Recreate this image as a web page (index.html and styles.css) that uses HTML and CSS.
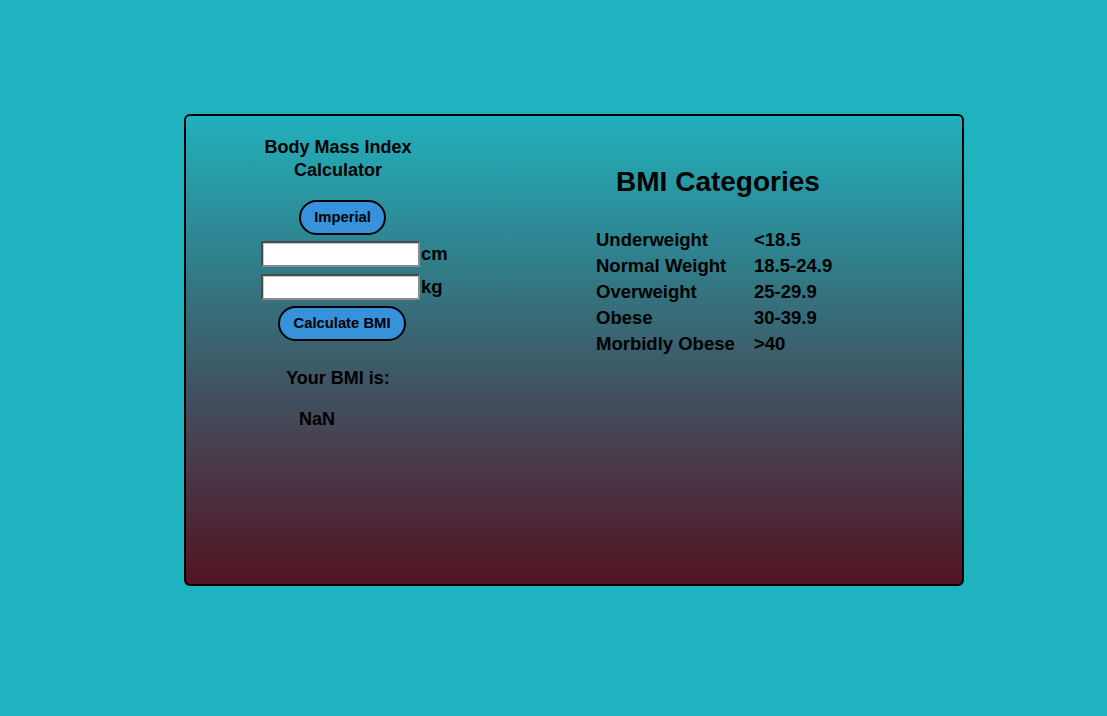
FILE: index.html
```html
<!DOCTYPE html>
<html>
<head>
<meta charset="utf-8">
<title>BMI Calculator</title>
<link rel="stylesheet" href="styles.css">
</head>
<body>
<div class="page">
  <div class="card">
    <div class="calc">
      <h2 class="calc-title">Body Mass Index<br>Calculator</h2>
      <button class="pill pill-imperial">Imperial</button>
      <div class="field"><input type="text" class="num"><span class="unit">cm</span></div>
      <div class="field field-2"><input type="text" class="num"><span class="unit">kg</span></div>
      <button class="pill pill-calc">Calculate BMI</button>
      <p class="result-label">Your BMI is:</p>
      <p class="result-value">NaN</p>
    </div>
    <div class="cats">
      <div class="cats-box">
        <h1 class="cats-title">BMI Categories</h1>
        <div class="cats-table">
          <span>Underweight</span><span>&lt;18.5</span>
          <span>Normal Weight</span><span>18.5-24.9</span>
          <span>Overweight</span><span>25-29.9</span>
          <span>Obese</span><span>30-39.9</span>
          <span>Morbidly Obese</span><span>&gt;40</span>
        </div>
      </div>
    </div>
  </div>
</div>
</body>
</html>
```
FILE: styles.css
```css
html, body {
  margin: 0;
  padding: 0;
  background: #1eb3be;
  font-family: "Liberation Sans", Arial, sans-serif;
  font-weight: bold;
  color: #000;
}
.page {
  padding: 114px 0 0 184px;
  height: 716px;
  box-sizing: border-box;
}
.card {
  width: 780px;
  height: 472px;
  box-sizing: border-box;
  border: 2px solid #000;
  border-radius: 6px;
  background: linear-gradient(to bottom, #21b1bc 0%, #35707c 40%, #474050 70%, #511421 100%);
  display: flex;
}
.calc {
  width: 304px;
  padding-top: 20px;
  display: flex;
  flex-direction: column;
  align-items: flex-start;
}
.calc-title {
  margin: 0;
  align-self: stretch;
  text-align: center;
  font-size: 18px;
  line-height: 23px;
  font-weight: bold;
}
.pill {
  font-family: "Liberation Sans", Arial, sans-serif;
  font-weight: bold;
  font-size: 14.8px;
  line-height: 17px;
  background: #3592db;
  border: 2px solid #000;
  border-radius: 18px;
  color: #000;
  padding: 7px 0;
  height: 35px;
  box-sizing: border-box;
}
.pill-imperial {
  margin: 18px 0 0 113px;
  width: 87px;
}
.pill-calc {
  margin: 6px 0 0 92px;
  width: 128px;
}
.field {
  margin: 6px 0 0 75px;
  display: flex;
  align-items: center;
  height: 26px;
}
.field-2 {
  margin-top: 7px;
}
.num {
  width: 159px;
  height: 26px;
  box-sizing: border-box;
  border: 2px solid;
  border-color: #4a4a4a #8a8a8a #8a8a8a #4a4a4a;
  box-shadow: inset 1px 1px 0 #c8c8c8;
  background: #fff;
  padding: 0 2px;
  margin: 0;
}
.unit {
  font-size: 18.5px;
  line-height: 26px;
  margin-left: 1px;
}
.result-label {
  margin: 26px 0 0;
  align-self: stretch;
  text-align: center;
  font-size: 18px;
  line-height: 23px;
}
.result-value {
  margin: 18px 0 0 113px;
  font-size: 18px;
  line-height: 23px;
}
.cats {
  padding: 49px 0 0 106px;
}
.cats-box {
  display: inline-block;
}
.cats-title {
  margin: 0;
  text-align: center;
  font-size: 28px;
  line-height: 34px;
  font-weight: bold;
  width: 244px;
}
.cats-table {
  margin-top: 28px;
  display: grid;
  grid-template-columns: 158px auto;
  grid-auto-rows: 26px;
  font-size: 18.5px;
  line-height: 26px;
}
```
